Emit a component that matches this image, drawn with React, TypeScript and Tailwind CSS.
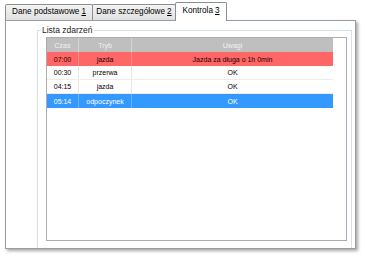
const rows = [
  { time: "07:00", mode: "jazda", note: "Jazda za długa o 1h 0min", kind: "alert" },
  { time: "00:30", mode: "przerwa", note: "OK", kind: "normal" },
  { time: "04:15", mode: "jazda", note: "OK", kind: "normal" },
  { time: "05:14", mode: "odpoczynek", note: "OK", kind: "selected" },
];

function Tab({ label, hotkey, active, width }: { label: string; hotkey: string; active?: boolean; width: string }) {
  if (active) {
    return (
      <div
        className={`${width} relative z-10 -mb-px -ml-px flex h-[19px] items-center justify-center rounded-t-[2px] border border-b-0 border-[#8c8e90] bg-white pb-[1px] text-black`}
      >
        {label} <span className="ml-[2px] underline">{hotkey}</span>
      </div>
    );
  }
  return (
    <div
      className={`${width} -ml-px flex h-[16px] items-center justify-center rounded-t-[2px] border border-b-0 border-[#8c8e90] bg-linear-to-b from-[#f4f4f4] to-[#e1e1e1] text-black first:ml-0`}
    >
      {label} <span className="ml-[2px] underline">{hotkey}</span>
    </div>
  );
}

function App() {
  return (
    <div className="h-[257px] w-[365px] bg-white font-['Liberation_Sans',Arial,sans-serif] text-[8.2px] leading-none">
      <div className="flex items-end pl-[5px] pt-[2px]">
        <Tab label="Dane podstawowe" hotkey="1" width="w-[88px]" />
        <Tab label="Dane szczegółowe" hotkey="2" width="w-[84px]" />
        <Tab label="Kontrola" hotkey="3" width="w-[52px]" active />
      </div>

      <div className="ml-[5px] flex h-[229px] w-[351px] border border-[#9a9c9e] bg-white pl-[31px] pr-[3px] pt-[4px] shadow-[2px_2px_3px_rgba(0,0,0,0.35)]">
        <fieldset className="flex flex-1 flex-col border border-b-0 border-[#d6e0e8] pb-[7px] pl-[8px] pr-[4px]">
          <legend className="-ml-[5px] px-[1px] text-[8.5px] leading-[10px] text-[#222]">Lista zdarzeń</legend>
          <div className="mt-[2px] flex-1 border border-[#adadad] bg-white">
            <div className="w-[286px] text-[7px]">
              <div className="flex h-[14px] items-center bg-[#bfbfbf] text-[#f2f2f2]">
                <div className="flex h-full w-[32px] items-center justify-center border-r border-[#d4d4d4]">Czas</div>
                <div className="flex h-full w-[53px] items-center justify-center border-r border-[#d4d4d4]">Tryb</div>
                <div className="flex h-full flex-1 items-center justify-center">Uwagi</div>
              </div>
              {rows.map((r) => (
                <div
                  key={r.time}
                  className={
                    r.kind === "alert"
                      ? "flex h-[14px] items-center bg-[#ff6666] text-[#1a0000]"
                      : r.kind === "selected"
                        ? "flex h-[14px] items-center bg-[#3399ff] text-white"
                        : "flex h-[14px] items-center border-b border-[#ececec] bg-white text-black"
                  }
                >
                  <div
                    className={
                      r.kind === "normal"
                        ? "flex h-full w-[32px] items-center justify-center border-r border-[#e6e6e6]"
                        : "flex h-full w-[32px] items-center justify-center border-r border-white/25"
                    }
                  >
                    {r.time}
                  </div>
                  <div
                    className={
                      r.kind === "normal"
                        ? "flex h-full w-[53px] items-center justify-center border-r border-[#e6e6e6]"
                        : "flex h-full w-[53px] items-center justify-center border-r border-white/25"
                    }
                  >
                    {r.mode}
                  </div>
                  <div className="flex h-full flex-1 items-center justify-center">{r.note}</div>
                </div>
              ))}
            </div>
          </div>
        </fieldset>
      </div>
    </div>
  );
}

export default App;
